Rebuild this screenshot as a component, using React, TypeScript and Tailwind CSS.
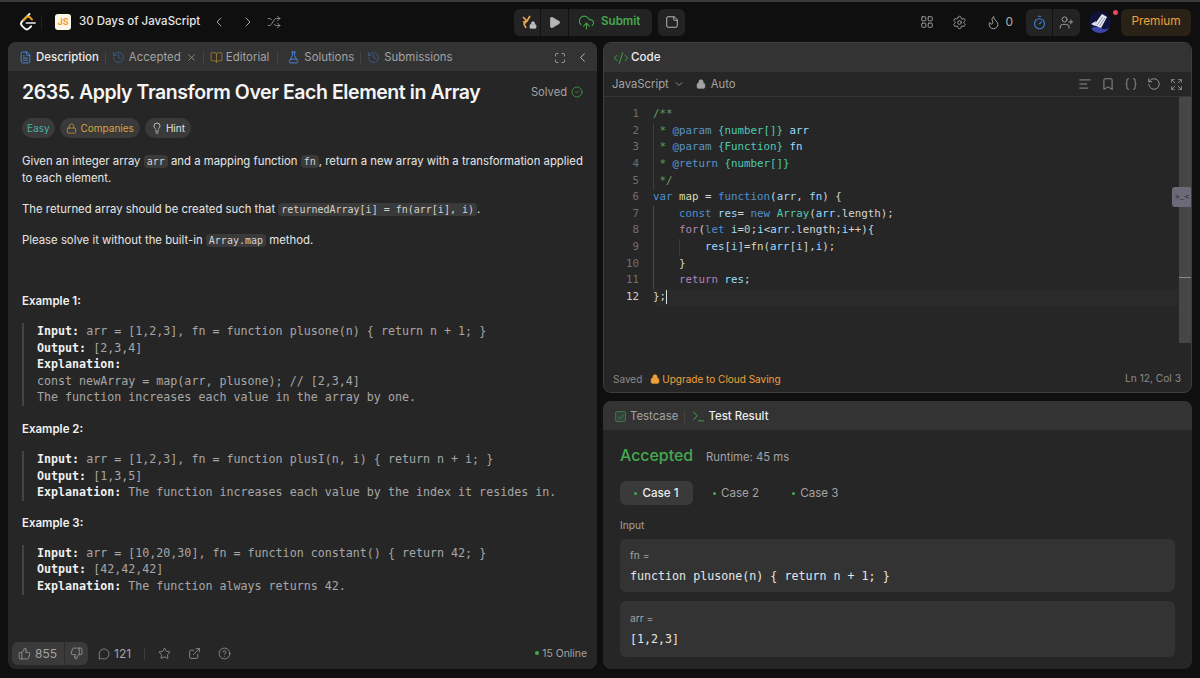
import { Bookmark, Check, ChevronDown, ChevronLeft, ChevronRight, CircleCheck, CircleHelp, CloudUpload, CodeXml, FlaskConical, BookOpen, FileText, Flame, Lightbulb, LayoutGrid, Lock, Maximize, MessageCircle, Play, Settings, Shuffle, Star, StickyNote, ThumbsDown, ThumbsUp, Timer, UserPlus, X, AlignLeft, Braces, RotateCcw, Expand, ExternalLink, History, Terminal } from "lucide-react";
import type { ReactNode } from "react";

const mono = "font-['DejaVu_Sans_Mono',monospace]";

function Inline({ children }: { children: ReactNode }) {
  return <code className={`${mono} text-[10px] leading-none bg-[#3a3a3a] rounded-[4px] px-[3px] py-[1px] text-[#d4d4d4]`}>{children}</code>;
}

function Sep({ wide }: { wide?: boolean }) {
  return <div className={`w-px h-[12px] bg-[#444] ${wide ? "ml-[8px] mr-[9px]" : "mx-[6px]"}`} />;
}

function Example({ title, lines, mb }: { title: string; lines: ReactNode[]; mb: string }) {
  return (
    <div className={mb}>
      <div className="text-[11.5px] leading-[17px] font-semibold text-[#f2f2f2] mb-[13px]">{title}</div>
      <div className={`${mono} border-l-2 border-[#444] pl-[13px] text-[11.66px] leading-[16.6px] text-[#a6a6a6] whitespace-pre`}>
        {lines.map((l, i) => <div key={i}>{l}</div>)}
      </div>
    </div>
  );
}

const B = ({ children }: { children: ReactNode }) => <span className="font-bold text-[#f0f0f0]">{children}</span>;

const C = {
  com: "text-[#6d9b5f]",
  tag: "text-[#5a93c9]",
  type: "text-[#4ec9b0]",
  kw: "text-[#4f8fd0]",
  ctl: "text-[#b584b4]",
  v: "text-[#9cdcfe]",
  f: "text-[#dcdcaa]",
  p: "text-[#d4d4d4]",
  num: "text-[#b5cea8]",
};

function S({ c, children }: { c: string; children: ReactNode }) {
  return <span className={c}>{children}</span>;
}

const codeLines: ReactNode[] = [
  <S c={C.com}>/**</S>,
  <><S c={C.com}> * </S><S c={C.tag}>@param</S> <S c={C.type}>{"{number[]}"}</S> <S c={C.v}>arr</S></>,
  <><S c={C.com}> * </S><S c={C.tag}>@param</S> <S c={C.type}>{"{Function}"}</S> <S c={C.v}>fn</S></>,
  <><S c={C.com}> * </S><S c={C.tag}>@return</S> <S c={C.type}>{"{number[]}"}</S></>,
  <S c={C.com}> */</S>,
  <><S c={C.kw}>var</S> <S c={C.f}>map</S> <S c={C.p}>=</S> <S c={C.kw}>function</S><S c={C.p}>(</S><S c={C.v}>arr</S><S c={C.p}>,</S> <S c={C.v}>fn</S><S c={C.p}>) {"{"}</S></>,
  <>{"    "}<S c={C.kw}>const</S> <S c={C.v}>res</S><S c={C.p}>=</S> <S c={C.kw}>new</S> <S c={C.type}>Array</S><S c={C.p}>(</S><S c={C.v}>arr</S><S c={C.p}>.length);</S></>,
  <>{"    "}<S c={C.ctl}>for</S><S c={C.p}>(</S><S c={C.kw}>let</S> <S c={C.v}>i</S><S c={C.p}>=</S><S c={C.num}>0</S><S c={C.p}>;</S><S c={C.v}>i</S><S c={C.p}>{"<"}</S><S c={C.v}>arr</S><S c={C.p}>.length;</S><S c={C.v}>i</S><S c={C.p}>{"++){"}</S></>,
  <>{"        "}<S c={C.v}>res</S><S c={C.p}>[</S><S c={C.v}>i</S><S c={C.p}>]=</S><S c={C.f}>fn</S><S c={C.p}>(</S><S c={C.v}>arr</S><S c={C.p}>[</S><S c={C.v}>i</S><S c={C.p}>],</S><S c={C.v}>i</S><S c={C.p}>);</S></>,
  <S c={C.p}>{"    }"}</S>,
  <>{"    "}<S c={C.ctl}>return</S> <S c={C.v}>res</S><S c={C.p}>;</S></>,
  <S c={C.p}>{"};"}</S>,
];

function Logo() {
  return (
    <svg width="20" height="20" viewBox="0 0 20 20" fill="none">
      <path d="M11.5 2 L4 9.5 a3.2 3.2 0 0 0 0 4.4 L6.6 16.4 a3.2 3.2 0 0 0 4.4 0 L13.2 14.3" stroke="#f4f4f4" strokeWidth="1.9" strokeLinecap="round" strokeLinejoin="round" />
      <path d="M5.5 8 L8 5.5 a3 3 0 0 1 4 0 L14 7.5" stroke="#f0a020" strokeWidth="1.9" strokeLinecap="round" />
      <path d="M8.5 11 H17" stroke="#b3b3b3" strokeWidth="1.9" strokeLinecap="round" />
    </svg>
  );
}

function Avatar() {
  return (
    <svg width="22" height="22" viewBox="0 0 22 22" className="rounded-full">
      <circle cx="11" cy="11" r="11" fill="#10123a" />
      <path d="M1 18 Q8 14 12 17 T21 16 L17 22 H4 Z" fill="#3b46a8" />
      <path d="M5 14 L13 3 L18 6 L12 17 Z" fill="#e8e8f0" />
      <path d="M8 14 L14 6 M10.5 15 L16 7" stroke="#8a8aa0" strokeWidth="1" />
      <path d="M2 13 L7 10 L6 15 Z" fill="#dfe3f2" />
    </svg>
  );
}

export default function App() {
  return (
    <div className="w-[1200px] h-[678px] overflow-hidden bg-[#0f0f0f] flex flex-col font-['Inter',sans-serif] text-[#e6e6e6] border-t-2 border-[#3a3a3a]">
      {/* top bar */}
      <header className="h-[40px] shrink-0 flex items-center justify-between pl-[18px] pr-[9px]">
        <div className="flex items-center w-[400px]">
          <Logo />
          <div className="w-px h-[14px] bg-[#222] ml-[3px] mr-[13px]" />
          <div className="w-[16px] h-[16px] rounded-[3px] bg-[#fff6ea] flex items-center justify-center text-[9px] font-bold text-[#f29b2c] mr-[8px]">JS</div>
          <span className="text-[11.5px] font-medium text-[#e4e4e4]">30 Days of JavaScript</span>
          <ChevronLeft size={16} strokeWidth={1.4} className="text-[#b0b0b0] ml-[11px]" />
          <ChevronRight size={16} strokeWidth={1.4} className="text-[#b0b0b0] ml-[13px]" />
          <Shuffle size={14} strokeWidth={1.4} className="text-[#a0a0a0] ml-[11px]" />
        </div>
        <div className="flex items-center gap-[6px] ml-[96px]">
          <div className="flex items-center h-[27px] rounded-[6px] bg-[#232323] overflow-hidden">
            <div className="w-[27px] h-full flex items-center justify-center border-r border-[#111]">
              <span className="relative">
                <svg width="13" height="14" viewBox="0 0 13 14" fill="none"><path d="M2 2 L6 6 L3 9 L5 13 M9 1 L6 6 M2 7 L6 6" stroke="#f0a84a" strokeWidth="1.6" /></svg>
                <Lock size={8} className="absolute right-[-3px] bottom-0 text-[#bdbdbd]" fill="#bdbdbd" />
              </span>
            </div>
            <div className="w-[28px] h-full flex items-center justify-center border-r border-[#111]">
              <Play size={13} className="text-[#b5b5b5]" fill="#b5b5b5" />
            </div>
            <div className="flex items-center gap-[6px] pl-[9px] pr-[12px] h-full">
              <CloudUpload size={17} strokeWidth={1.6} className="text-[#3fa34a]" />
              <span className="text-[11.6px] font-semibold text-[#45a84f]">Submit</span>
            </div>
          </div>
          <div className="w-[27px] h-[27px] rounded-[6px] bg-[#232323] flex items-center justify-center">
            <StickyNote size={14} strokeWidth={1.6} className="text-[#c0c0c0]" />
          </div>
        </div>
        <div className="flex items-center ml-auto">
          <LayoutGrid size={14} strokeWidth={1.5} className="text-[#a8a8a8]" />
          <Settings size={15} strokeWidth={1.4} className="text-[#a8a8a8] ml-[18px]" />
          <Flame size={15} strokeWidth={1.5} className="text-[#a8a8a8] ml-[19px]" />
          <span className="text-[12px] text-[#b0b0b0] ml-[4px] mr-[13px]">0</span>
          <div className="flex items-center h-[27px] rounded-[6px] bg-[#232323] mr-[9px]">
            <div className="w-[27px] h-full flex items-center justify-center border-r border-[#111]">
              <Timer size={15} strokeWidth={1.8} className="text-[#3b7fd6]" />
            </div>
            <div className="w-[27px] h-full flex items-center justify-center">
              <UserPlus size={15} strokeWidth={1.4} className="text-[#a8a8a8]" />
            </div>
          </div>
          <span className="relative mr-[10px]">
            <Avatar />
            <span className="absolute top-[-1px] right-[-7px] w-[5px] h-[5px] rounded-full bg-[#f0445a]" />
          </span>
          <div className="h-[27px] w-[70px] rounded-[6px] bg-[#2a2117] flex items-center justify-center text-[11.8px] text-[#eda13a]">Premium</div>
        </div>
      </header>

      <main className="flex-1 flex gap-[6px] pl-[8px] pr-[8px] pb-[9px] min-h-0">
        {/* left panel */}
        <section className="w-[589px] bg-[#262626] rounded-[8px] flex flex-col overflow-hidden">
          <div className="h-[29px] shrink-0 bg-[#333333] flex items-center pl-[11px] pr-[7px] pt-[2px] text-[11.45px] text-[#a3a3a3]">
            <FileText size={13} strokeWidth={1.8} className="text-[#4a86d8] mr-[4px]" />
            <span className="font-medium text-[#ececec]">Description</span>
            <Sep />
            <History size={13} strokeWidth={1.6} className="text-[#3d5f8f] mr-[4px]" />
            <span>Accepted</span>
            <X size={11} strokeWidth={1.6} className="ml-[5px]" />
            <Sep />
            <BookOpen size={13} strokeWidth={1.5} className="text-[#a67c32] mr-[3px]" />
            <span>Editorial</span>
            <Sep wide />
            <FlaskConical size={13} strokeWidth={1.8} className="text-[#4a86d8] mr-[4px]" />
            <span>Solutions</span>
            <Sep />
            <History size={13} strokeWidth={1.6} className="text-[#3d5f8f] mr-[4px]" />
            <span>Submissions</span>
            <Maximize size={12} strokeWidth={1.5} className="ml-auto text-[#c0c0c0]" />
            <ChevronLeft size={15} strokeWidth={1.5} className="ml-[9px] text-[#c0c0c0]" />
          </div>
          <div className="flex-1 px-[14px] min-h-0">
            <div className="flex items-center justify-between mt-[8px] h-[27px]">
              <h1 className="text-[19.5px] font-semibold text-[#f5f5f5] tracking-[-0.43px]">2635. Apply Transform Over Each Element in Array</h1>
              <span className="flex items-center gap-[4px] text-[11.2px] text-[#a3a3a3]">Solved <CircleCheck size={12} strokeWidth={1.6} className="text-[#3fa34a]" /></span>
            </div>
            <div className="flex items-center gap-[5px] mt-[12px] text-[10px]">
              <span className="h-[20px] px-[5px] rounded-full bg-[#3a3a3a] flex items-center text-[#46b3a6]">Easy</span>
              <span className="h-[20px] px-[6px] rounded-full bg-[#3a3a3a] flex items-center gap-[4px] text-[#d9a23f]"><Lock size={11} strokeWidth={1.5} />Companies</span>
              <span className="h-[20px] px-[6px] rounded-full bg-[#3a3a3a] flex items-center gap-[3px] text-[#e4e4e4]"><Lightbulb size={12} strokeWidth={1.5} />Hint</span>
            </div>
            <div className="text-[11.35px] leading-[17px] text-[#e6e6e6] mt-[15px]">
              <p>Given an integer array <Inline>arr</Inline> and a mapping function <Inline>fn</Inline>, return a new array with a transformation applied to each element.</p>
              <p className="mt-[14px]">The returned array should be created such that <Inline>returnedArray[i] = fn(arr[i], i)</Inline>.</p>
              <p className="mt-[14px]">Please solve it without the built-in <Inline>Array.map</Inline> method.</p>
            </div>
            <div className="mt-[44px]">
              <Example mb="mb-[15px]" title="Example 1:" lines={[
                <><B>Input:</B> arr = [1,2,3], fn = function plusone(n) {"{"} return n + 1; {"}"}</>,
                <><B>Output:</B> [2,3,4]</>,
                <B>Explanation:</B>,
                "const newArray = map(arr, plusone); // [2,3,4]",
                "The function increases each value in the array by one.",
              ]} />
              <Example mb="mb-[14px]" title="Example 2:" lines={[
                <><B>Input:</B> arr = [1,2,3], fn = function plusI(n, i) {"{"} return n + i; {"}"}</>,
                <><B>Output:</B> [1,3,5]</>,
                <><B>Explanation:</B> The function increases each value by the index it resides in.</>,
              ]} />
              <Example mb="" title="Example 3:" lines={[
                <><B>Input:</B> arr = [10,20,30], fn = function constant() {"{"} return 42; {"}"}</>,
                <><B>Output:</B> [42,42,42]</>,
                <><B>Explanation:</B> The function always returns 42.</>,
              ]} />
            </div>
          </div>
          <div className="h-[31px] shrink-0 flex items-center pl-[4px] pr-[10px] text-[12px] text-[#a3a3a3]">
            <div className="flex items-center h-[23px] rounded-[6px] bg-[#3a3a3a]">
              <div className="flex items-center gap-[4px] pl-[6px] pr-[7px] border-r border-[#2c2c2c] h-full"><ThumbsUp size={13} strokeWidth={1.4} />855</div>
              <div className="px-[5px]"><ThumbsDown size={13} strokeWidth={1.4} /></div>
            </div>
            <MessageCircle size={12} strokeWidth={1.4} className="ml-[10px] mr-[4px]" />
            <span>121</span>
            <div className="w-px h-[12px] bg-[#3c3c3c] mx-[13px]" />
            <Star size={13} strokeWidth={1.4} />
            <ExternalLink size={13} strokeWidth={1.4} className="ml-[17px]" />
            <CircleHelp size={13} strokeWidth={1.4} className="ml-[17px]" />
            <span className="ml-auto flex items-center gap-[3px] text-[10.4px]"><span className="w-[4px] h-[4px] rounded-full bg-[#45a84f]" />15 Online</span>
          </div>
        </section>

        {/* right column */}
        <div className="w-[589px] flex flex-col gap-[8px]">
          <section className="relative h-[351px] shrink-0 bg-[#262626] rounded-[8px] border border-[#3e3e3e] flex flex-col overflow-hidden">
            <div className="h-[29px] shrink-0 bg-[#333333] flex items-center pl-[9px] text-[11.6px] font-medium text-[#ececec] gap-[2px]">
              <CodeXml size={16} strokeWidth={1.5} className="text-[#3fa34a]" />Code
            </div>
            <div className="h-[25px] shrink-0 border-b border-[#363636] flex items-center pl-[8px] pr-[8px] text-[11.3px] text-[#a3a3a3]">
              JavaScript<ChevronDown size={12} strokeWidth={1.5} className="ml-[4px]" />
              <Lock size={10} fill="#a3a3a3" className="ml-[11px] mr-[5px]" />Auto
              <div className="ml-auto flex items-center gap-[9px]">
                <AlignLeft size={14} strokeWidth={1.4} />
                <Bookmark size={14} strokeWidth={1.4} />
                <Braces size={14} strokeWidth={1.4} />
                <RotateCcw size={14} strokeWidth={1.4} />
                <Expand size={13} strokeWidth={1.4} />
              </div>
            </div>
            <div className="relative flex-1 flex min-h-0">
              <div className={`${mono} flex-1 text-[10.8px] leading-[16.64px] pt-[9px] whitespace-pre flex`}>
                <div className="w-[35px] text-right text-[#6e6e6e] shrink-0">
                  {codeLines.map((_, i) => <div key={i} className={i === 11 ? "text-[#cfcfcf]" : ""}>{i + 1}</div>)}
                </div>
                <div className="ml-[14px] flex-1 relative">
                  {/* indent guides */}
                  <div className="absolute left-0 top-[17px] h-[67px] w-px bg-[#3e3e3e]" />
                  <div className="absolute left-0 top-[100px] h-[83px] w-px bg-[#4a4a4a]" />
                  <div className="absolute left-[26px] top-[133px] h-[17px] w-px bg-[#3a3a3a]" />
                  {codeLines.map((l, i) => (
                    <div key={i} className={i === 11 ? "bg-[#2a2a2a]" : ""}>
                      {l}{i === 11 && <span className="inline-block w-px h-[14px] bg-[#ddd] align-middle" />}
                    </div>
                  ))}
                </div>
              </div>
              <div className="relative w-[12px] shrink-0 bg-[#464646] mb-[23px]">
                <div className="absolute left-0 right-0 top-[180px] h-px bg-[#8a8a8a]" />
              </div>
            </div>
            <div className="h-[26px] shrink-0 flex items-center pl-[9px] pr-[10px] text-[10px] text-[#8a8a8a]">
              Saved
              <Lock size={10} fill="#eda13a" className="text-[#eda13a] ml-[8px] mr-[2px]" />
              <span className="text-[#eda13a]">Upgrade to Cloud Saving</span>
              <span className="ml-auto text-[10.2px]">Ln 12, Col 3</span>
            </div>
            <div className="absolute right-[-1px] top-[144px] w-[20px] h-[20px] rounded-[3px] bg-[#6c6a78] text-[#111] text-[8px] flex items-center justify-center font-mono">{">_<"}</div>
          </section>

          <section className="flex-1 bg-[#262626] rounded-[8px] flex flex-col overflow-hidden">
            <div className="h-[29px] shrink-0 bg-[#333333] flex items-center pl-[12px] pt-[2px] text-[11.4px] text-[#a3a3a3]">
              <span className="w-[11px] h-[11px] rounded-[2px] border border-[#3f6f44] bg-[#33443a] flex items-center justify-center mr-[4px]"><Check size={8} className="text-[#3fa34a]" /></span>
              Testcase
              <Sep />
              <Terminal size={15} strokeWidth={1.6} className="text-[#3fa34a] mr-[2px]" />
              <span className="font-medium text-[#ececec]">Test Result</span>
            </div>
            <div className="flex-1 px-[17px] pt-[14px] min-h-0">
              <div className="flex items-baseline gap-[13px]">
                <span className="text-[15.9px] font-medium text-[#45a84f]">Accepted</span>
                <span className="text-[11.3px] text-[#a3a3a3]">Runtime: 45 ms</span>
              </div>
              <div className="flex items-center mt-[13px] text-[11.6px] text-[#a3a3a3]">
                <span className="h-[24px] w-[73px] pt-[2px] rounded-[6px] bg-[#3a3a3a] flex items-center justify-center gap-[5px] font-medium text-[#ececec]"><span className="w-[3px] h-[3px] rounded-full bg-[#45a84f]" />Case 1</span>
                <span className="flex items-center gap-[5px] ml-[20px] pt-[2px]"><span className="w-[3px] h-[3px] rounded-full bg-[#45a84f]" />Case 2</span>
                <span className="flex items-center gap-[5px] ml-[33px] pt-[2px]"><span className="w-[3px] h-[3px] rounded-full bg-[#45a84f]" />Case 3</span>
              </div>
              <div className="text-[10.2px] text-[#a3a3a3] mt-[13px]">Input</div>
              <div className="mt-[6px] h-[53px] rounded-[6px] bg-[#333333] px-[10px] pt-[10px]">
                <div className="text-[10.2px] text-[#a3a3a3] leading-[13px]">fn =</div>
                <div className={`${mono} text-[11.66px] text-[#e6e6e6] mt-[6px]`}>function plusone(n) {"{"} return n + 1; {"}"}</div>
              </div>
              <div className="mt-[9px] h-[56px] rounded-[6px] bg-[#333333] px-[10px] pt-[11px]">
                <div className="text-[10.2px] text-[#a3a3a3] leading-[13px]">arr =</div>
                <div className={`${mono} text-[11.66px] text-[#e6e6e6] mt-[6px]`}>[1,2,3]</div>
              </div>
            </div>
          </section>
        </div>
      </main>
    </div>
  );
}
